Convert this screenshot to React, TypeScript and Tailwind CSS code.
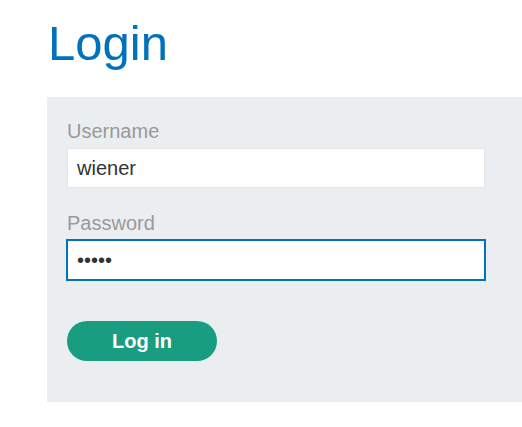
export default function App() {
  return (
    <div className="min-h-screen bg-white font-['Liberation_Sans',Arial,sans-serif]">
      <div className="pl-[47px] pt-[18px]">
        {/* Title */}
        <h1 className="ml-px text-[49px] leading-[50px] text-[#0071bc]">Login</h1>

        {/* Form panel */}
        <form
          className="mt-[29px] h-[305px] w-[500px] bg-[#eaeef1] px-5 pt-5"
          onSubmit={(e) => e.preventDefault()}
        >
          <label className="block text-[20px] leading-[28px] text-[#999999]">Username</label>
          <input
            type="text"
            defaultValue="wiener"
            className="mt-[3px] block h-10 w-[418px] border border-[#e6e6e6] bg-white px-[9px] text-[20px] text-[#333333] outline-none"
          />

          <label className="mt-[21px] block text-[20px] leading-[28px] text-[#999999]">Password</label>
          <input
            type="password"
            defaultValue="abcde"
            className="mt-[3px] block h-10 w-[418px] border border-[#0071bc] bg-white px-[9px] text-[20px] text-[#333333] outline outline-1 outline-[#0071bc]"
          />

          <button
            type="submit"
            className="mt-[41px] block h-10 w-[150px] rounded-full bg-[#189d80] text-[20px] font-bold text-white"
          >
            Log in
          </button>
        </form>
      </div>
    </div>
  );
}
